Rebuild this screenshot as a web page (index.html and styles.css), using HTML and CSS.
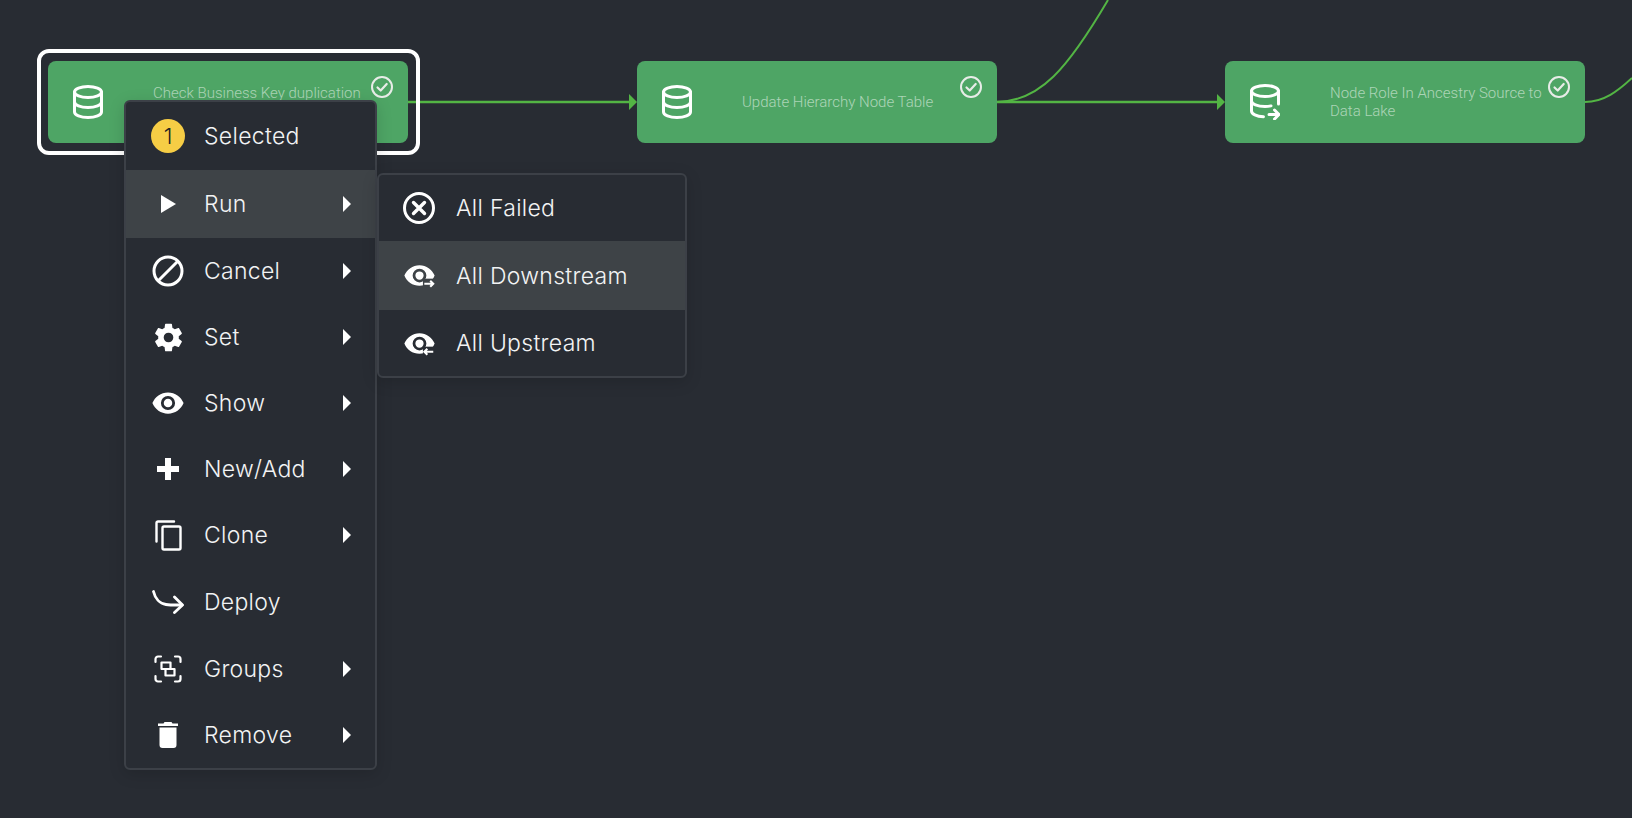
FILE: index.html
```html
<!DOCTYPE html>
<html>

<head>
  <meta charset="utf-8">
  <link rel="stylesheet" href="styles.css">
</head>

<body>
  <svg class="sprite">
    <defs>
      <symbol id="db" viewBox="0 0 30 34">
        <g fill="none" stroke="currentColor" stroke-width="3" stroke-linecap="round">
          <ellipse cx="15" cy="7" rx="13.5" ry="5.5" />
          <path d="M1.5 7v20c0 3 6 5.5 13.5 5.5s13.5-2.500 13.500-5.500V7" />
          <path d="M1.500 17c0 3 6 5.500 13.500 5.500s13.500-2.500 13.500-5.500" />
        </g>
      </symbol>
      <symbol id="db-out" viewBox="0 0 30 36">
        <g fill="none" stroke="currentColor" stroke-width="3" stroke-linecap="round" stroke-linejoin="round">
          <ellipse cx="15" cy="7" rx="13.500" ry="5.500" />
          <path d="M1.500 7v20c0 3 5 5.500 12 5.800" />
          <path d="M1.500 17c0 3 6 5.500 13.500 5.500 2 0 4-.2 6-.6" />
          <path d="M28.500 7v13" />
          <path d="M19 30.500h10M24.500 26l4.500 4.500-4.500 4.500" />
        </g>
      </symbol>
      <symbol id="check" viewBox="0 0 24 24">
        <circle cx="12" cy="12" r="10" fill="none" stroke="currentColor" stroke-width="2" />
        <path d="M7.500 12.500l3.200 3 6-6.500" fill="none" stroke="currentColor" stroke-width="2.200" stroke-linecap="round" stroke-linejoin="round" />
      </symbol>
      <symbol id="caret" viewBox="0 0 8 16">
        <path d="M0 0l8 8-8 8z" fill="currentColor" />
      </symbol>
      <mask id="eye-cut">
        <rect width="24" height="24" fill="#fff" />
        <rect x="14.500" y="14.300" width="10" height="10" fill="#000" />
      </mask>
      <symbol id="eye-base" viewBox="0 0 24 24">
        <path mask="url(#eye-cut)" fill="currentColor" d="M12,9A3,3 0 0,0 9,12A3,3 0 0,0 12,15A3,3 0 0,0 15,12A3,3 0 0,0 12,9M12,17A5,5 0 0,1 7,12A5,5 0 0,1 12,7A5,5 0 0,1 17,12A5,5 0 0,1 12,17M12,4.500C7,4.500 2.730,7.610 1,12C2.730,16.390 7,19.500 12,19.500C17,19.500 21.270,16.390 23,12C21.270,7.610 17,4.500 12,4.500Z" />
      </symbol>
    </defs>
  </svg>

  <div class="canvas">
    <svg class="edges" width="1632" height="818">
      <g fill="none" stroke="#53b544" stroke-width="2.400">
        <path d="M408 102H631" />
        <path d="M996 102H1219" />
        <path d="M996 102C1040 102 1068 68 1108 0" stroke-width="2" />
        <path d="M1585 102C1604 102 1618 91 1632 78" stroke-width="2" />
      </g>
      <path d="M629 94l8 8-8 8z" fill="#53b544" />
      <path d="M1217 94l8 8-8 8z" fill="#53b544" />
    </svg>

    <div class="selection"></div>

    <div class="node node-first">
      <svg class="node-icon"><use href="#db" /></svg>
      <div class="node-label">Check Business Key duplication<br>&nbsp;</div>
      <svg class="node-status"><use href="#check" /></svg>
    </div>

    <div class="node node-second">
      <svg class="node-icon"><use href="#db" /></svg>
      <div class="node-label">Update Hierarchy Node Table</div>
      <svg class="node-status"><use href="#check" /></svg>
    </div>

    <div class="node node-third">
      <svg class="node-icon node-icon-tall"><use href="#db-out" /></svg>
      <div class="node-label">Node Role In Ancestry Source to Data Lake</div>
      <svg class="node-status"><use href="#check" /></svg>
    </div>

    <div class="menu main-menu">
      <div class="menu-row row-tall">
        <span class="menu-icon"><span class="badge">1</span></span>
        <span class="menu-text">Selected</span>
      </div>
      <div class="menu-row row-tall active">
        <span class="menu-icon">
          <svg width="15" height="18" viewBox="0 0 15 18"><path d="M0 0l15 9-15 9z" fill="currentColor" /></svg>
        </span>
        <span class="menu-text">Run</span>
        <svg class="caret"><use href="#caret" /></svg>
      </div>
      <div class="menu-row">
        <span class="menu-icon">
          <svg width="32" height="32" viewBox="0 0 32 32" fill="none" stroke="currentColor" stroke-width="3">
            <circle cx="16" cy="16" r="14" />
            <path d="M6 26L26 6" />
          </svg>
        </span>
        <span class="menu-text">Cancel</span>
        <svg class="caret"><use href="#caret" /></svg>
      </div>
      <div class="menu-row">
        <span class="menu-icon">
          <svg width="33" height="33" viewBox="0 0 24 24"><path fill="currentColor" d="M12,15.500A3.500,3.500 0 0,1 8.500,12A3.500,3.500 0 0,1 12,8.500A3.500,3.500 0 0,1 15.500,12A3.500,3.500 0 0,1 12,15.500M19.430,12.970C19.470,12.650 19.500,12.330 19.500,12C19.500,11.670 19.470,11.340 19.430,11L21.540,9.370C21.730,9.220 21.780,8.950 21.660,8.730L19.660,5.270C19.540,5.050 19.270,4.960 19.050,5.050L16.560,6.050C16.040,5.660 15.500,5.320 14.870,5.070L14.500,2.420C14.460,2.180 14.250,2 14,2H10C9.750,2 9.540,2.180 9.500,2.420L9.130,5.070C8.500,5.320 7.960,5.660 7.440,6.050L4.950,5.050C4.730,4.960 4.460,5.050 4.340,5.270L2.340,8.730C2.210,8.950 2.270,9.220 2.460,9.370L4.570,11C4.530,11.340 4.500,11.670 4.500,12C4.500,12.330 4.530,12.650 4.570,12.970L2.460,14.630C2.270,14.780 2.210,15.050 2.340,15.270L4.340,18.730C4.460,18.950 4.730,19.030 4.950,18.940L7.440,17.940C7.960,18.340 8.500,18.680 9.130,18.930L9.500,21.580C9.540,21.820 9.750,22 10,22H14C14.250,22 14.460,21.820 14.500,21.580L14.870,18.930C15.500,18.670 16.040,18.340 16.560,17.940L19.050,18.950C19.270,19.030 19.540,18.950 19.660,18.730L21.660,15.270C21.780,15.050 21.730,14.780 21.540,14.630L19.430,12.970Z" /></svg>
        </span>
        <span class="menu-text">Set</span>
        <svg class="caret"><use href="#caret" /></svg>
      </div>
      <div class="menu-row">
        <span class="menu-icon">
          <svg width="34" height="34" viewBox="0 0 24 24"><path fill="currentColor" d="M12,9A3,3 0 0,0 9,12A3,3 0 0,0 12,15A3,3 0 0,0 15,12A3,3 0 0,0 12,9M12,17A5,5 0 0,1 7,12A5,5 0 0,1 12,7A5,5 0 0,1 17,12A5,5 0 0,1 12,17M12,4.500C7,4.500 2.730,7.610 1,12C2.730,16.390 7,19.500 12,19.500C17,19.500 21.270,16.390 23,12C21.270,7.610 17,4.500 12,4.500Z" /></svg>
        </span>
        <span class="menu-text">Show</span>
        <svg class="caret"><use href="#caret" /></svg>
      </div>
      <div class="menu-row">
        <span class="menu-icon">
          <svg width="22" height="22" viewBox="0 0 22 22"><path fill="currentColor" d="M8 0h6v8h8v6h-8v8H8v-8H0V8h8z" /></svg>
        </span>
        <span class="menu-text">New/Add</span>
        <svg class="caret"><use href="#caret" /></svg>
      </div>
      <div class="menu-row">
        <span class="menu-icon">
          <svg width="27" height="31" viewBox="0 0 27 31" fill="none" stroke="currentColor" stroke-width="2.400" stroke-linejoin="round">
            <rect x="7.500" y="6.500" width="18" height="23" rx="1.500" />
            <path d="M19 1.500H3A1.500 1.500 0 0 0 1.500 3v18.500" stroke-linecap="round" />
          </svg>
        </span>
        <span class="menu-text">Clone</span>
        <svg class="caret"><use href="#caret" /></svg>
      </div>
      <div class="menu-row row-mid">
        <span class="menu-icon">
          <svg width="32" height="24" viewBox="0 0 32 24" fill="none" stroke="currentColor" stroke-width="2.800" stroke-linecap="round" stroke-linejoin="round">
            <path d="M1.500 1.500C3 8 7.500 13.500 14 14.500c5 .7 11 .5 16 .5" />
            <path d="M22.500 7l8 8-8 7.500" />
          </svg>
        </span>
        <span class="menu-text">Deploy</span>
      </div>
      <div class="menu-row row-mid">
        <span class="menu-icon">
          <svg width="28" height="28" viewBox="0 0 28 28" fill="none" stroke="currentColor" stroke-width="2.200" stroke-linecap="round" stroke-linejoin="round">
            <path d="M1.500 7V4A2.500 2.500 0 0 1 4 1.500h3M21 1.500h3A2.500 2.500 0 0 1 26.500 4v3M26.500 21v3a2.500 2.500 0 0 1-2.500 2.500h-3M7 26.500H4A2.500 2.500 0 0 1 1.500 24v-3" />
            <rect x="7.500" y="7.500" width="9" height="6.500" />
            <rect x="11.500" y="14" width="9" height="6.500" />
          </svg>
        </span>
        <span class="menu-text">Groups</span>
        <svg class="caret"><use href="#caret" /></svg>
      </div>
      <div class="menu-row">
        <span class="menu-icon">
          <svg width="20" height="26" viewBox="0 0 20 26"><path fill="currentColor" d="M6.500 0h7l1 1.500H20V4H0V1.500h5.500zM1.500 5.500h17V23a3 3 0 0 1-3 3h-11a3 3 0 0 1-3-3z" /></svg>
        </span>
        <span class="menu-text">Remove</span>
        <svg class="caret"><use href="#caret" /></svg>
      </div>
    </div>

    <div class="menu sub-menu">
      <div class="menu-row">
        <span class="menu-icon">
          <svg width="32" height="32" viewBox="0 0 32 32" fill="none" stroke="currentColor" stroke-width="3">
            <circle cx="16" cy="16" r="14.500" />
            <path d="M10.500 10.500l11 11M21.500 10.500l-11 11" stroke-width="3.400" stroke-linecap="round" />
          </svg>
        </span>
        <span class="menu-text">All Failed</span>
      </div>
      <div class="menu-row row-sub-mid active">
        <span class="menu-icon">
          <svg width="33" height="33" viewBox="0 0 24 24">
            <use href="#eye-base" width="24" height="24" />
            <path d="M15.500 18h6.500M19.800 15.800L22 18l-2.200 2.200" fill="none" stroke="currentColor" stroke-width="1.500" />
          </svg>
        </span>
        <span class="menu-text">All Downstream</span>
      </div>
      <div class="menu-row">
        <span class="menu-icon">
          <svg width="33" height="33" viewBox="0 0 24 24">
            <use href="#eye-base" width="24" height="24" />
            <path d="M15.500 18H22M17.700 15.800L15.500 18l2.200 2.200" fill="none" stroke="currentColor" stroke-width="1.500" />
          </svg>
        </span>
        <span class="menu-text">All Upstream</span>
      </div>
    </div>
  </div>
</body>

</html>
```

FILE: styles.css
```css
* {
  box-sizing: border-box;
}

body {
  margin: 0;
  background-color: #282c33;
  font-family: Inter, "Noto Sans", sans-serif;
  color: white;
  overflow: hidden;
}

.sprite {
  position: absolute;
  width: 0;
  height: 0;
}

.canvas {
  position: relative;
  width: 1632px;
  height: 818px;
}

.edges {
  position: absolute;
  top: 0;
  left: 0;
}

.selection {
  position: absolute;
  left: 37px;
  top: 49px;
  width: 383px;
  height: 106px;
  border: 4px solid white;
  border-radius: 12px;
}

.node {
  position: absolute;
  top: 61px;
  width: 360px;
  height: 82px;
  display: flex;
  align-items: center;
  padding-left: 25px;
  background-color: #4ea565;
  border-radius: 8px;
  font-family: Roboto, sans-serif;
  color: white;
}

.node-first {
  left: 48px;
}

.node-second {
  left: 637px;
}

.node-third {
  left: 1225px;
}

.node-icon {
  width: 30px;
  height: 34px;
  flex-shrink: 0;
  margin-right: 50px;
}

.node-icon-tall {
  height: 36px;
}

.node-label {
  width: 232px;
  font-size: 15px;
  font-weight: 300;
  line-height: 18px;
  color: rgba(255, 255, 255, 0.55);
}

.node-status {
  position: absolute;
  top: 14px;
  right: 14px;
  width: 24px;
  height: 24px;
  color: #e8ece8;
}

.menu {
  position: absolute;
  background-color: #282c33;
  border: 2px solid #3c4047;
  border-radius: 6px;
  box-shadow: 0 4px 16px rgba(0, 0, 0, 0.15);
  overflow: hidden;
}

.main-menu {
  left: 124px;
  top: 100px;
  width: 253px;
}

.sub-menu {
  left: 377px;
  top: 173px;
  width: 310px;
}

.menu-row {
  display: flex;
  align-items: center;
  height: 66px;
  padding-left: 18px;
  padding-right: 24px;
}

.row-tall {
  height: 68px;
}

.row-mid {
  height: 67px;
}

.row-sub-mid {
  height: 69px;
}

.sub-menu .menu-row {
  padding-left: 16px;
}

.active {
  background-color: #3e4347;
}

.menu-icon {
  width: 48px;
  display: flex;
  justify-content: center;
  align-items: center;
  flex-shrink: 0;
}

.menu-text {
  flex: 1;
  margin-left: 12px;
  font-size: 23px;
  font-weight: 300;
  letter-spacing: 0.3px;
  color: #f2f3f4;
}

.sub-menu .menu-text {
  margin-left: 13px;
}

.caret {
  width: 8px;
  height: 16px;
  flex-shrink: 0;
}

.badge {
  width: 34px;
  height: 34px;
  border-radius: 50%;
  background-color: #f6cd45;
  color: #222;
  font-size: 22px;
  font-weight: 300;
  display: flex;
  align-items: center;
  justify-content: center;
}
```
